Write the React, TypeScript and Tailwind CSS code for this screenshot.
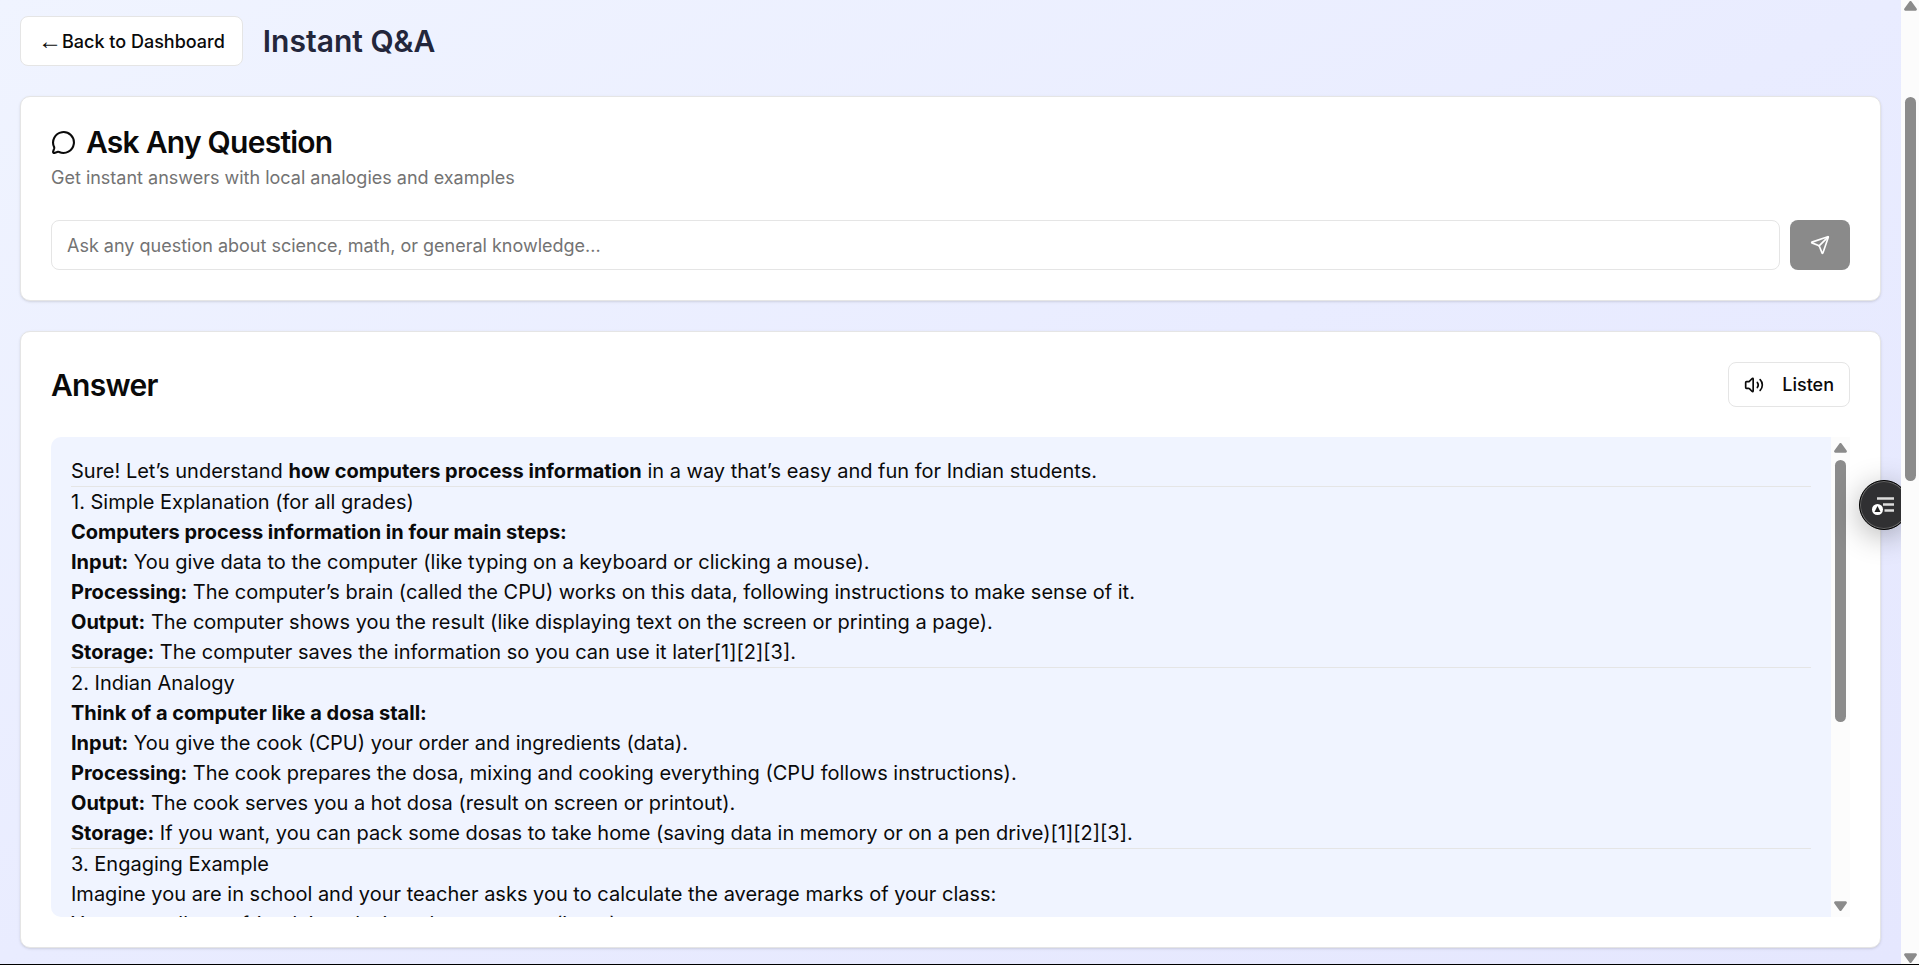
import { ReactNode, useState } from "react";
import { MessageCircle, Send, Volume2 } from "lucide-react";

type Line = { lead?: string; text?: string; tail?: string };

const sections: Line[][] = [
  [
    {
      text: "Sure! Let’s understand ",
      lead: "how computers process information",
      tail: " in a way that’s easy and fun for Indian students.",
    },
  ],
  [
    { text: "1. Simple Explanation (for all grades)" },
    { lead: "Computers process information in four main steps:" },
    { lead: "Input:", tail: " You give data to the computer (like typing on a keyboard or clicking a mouse)." },
    {
      lead: "Processing:",
      tail: " The computer’s brain (called the CPU) works on this data, following instructions to make sense of it.",
    },
    {
      lead: "Output:",
      tail: " The computer shows you the result (like displaying text on the screen or printing a page).",
    },
    { lead: "Storage:", tail: " The computer saves the information so you can use it later[1][2][3]." },
  ],
  [
    { text: "2. Indian Analogy" },
    { lead: "Think of a computer like a dosa stall:" },
    { lead: "Input:", tail: " You give the cook (CPU) your order and ingredients (data)." },
    {
      lead: "Processing:",
      tail: " The cook prepares the dosa, mixing and cooking everything (CPU follows instructions).",
    },
    { lead: "Output:", tail: " The cook serves you a hot dosa (result on screen or printout)." },
    {
      lead: "Storage:",
      tail: " If you want, you can pack some dosas to take home (saving data in memory or on a pen drive)[1][2][3].",
    },
  ],
  [
    { text: "3. Engaging Example" },
    { text: "Imagine you are in school and your teacher asks you to calculate the average marks of your class:" },
    { text: "You enter all your friends’ marks into the computer (input)." },
  ],
];

function Card({ children }: { children: ReactNode }) {
  return (
    <section className="rounded-[10px] border border-[#e5e5e5] bg-white p-[30px] shadow-sm">
      {children}
    </section>
  );
}

function Arrow({ down = false }: { down?: boolean }) {
  return (
    <svg
      width="13"
      height="10"
      viewBox="0 0 13 10"
      fill="#8b8b8b"
      aria-hidden
      className={down ? "shrink-0 rotate-180" : "shrink-0"}
    >
      <path d="M5.3 0.7a1.5 1.5 0 0 1 2.4 0l4.9 6.9a1.3 1.3 0 0 1-1.1 2.1H1.5A1.3 1.3 0 0 1 .4 7.6z" />
    </svg>
  );
}

function ScrollTrack({ className, before, thumb, after }: {
  className: string;
  before: number;
  thumb: number;
  after: number;
}) {
  return (
    <div aria-hidden className={["flex shrink-0 flex-col items-center bg-[#fcfcfc]", className].join(" ")}>
      <Arrow />
      <div className="flex w-[11px] flex-1 flex-col py-[7px]">
        <div style={{ flexGrow: before }} />
        <div className="rounded-full bg-[#8b8b8b]" style={{ flexGrow: thumb }} />
        <div style={{ flexGrow: after }} />
      </div>
      <Arrow down />
    </div>
  );
}

export default function App() {
  const [question, setQuestion] = useState("");

  return (
    <div className="flex h-screen overflow-hidden border-b border-black font-['Inter',sans-serif] text-[#0a0a0a]">
      <div className="relative min-w-0 flex-1 overflow-hidden bg-linear-to-br from-[#f0f4ff] via-[#e9ecff] to-[#e5e7fe]">
        <main className="flex flex-col gap-[30px] px-5 pt-4">
          <header className="flex items-center gap-5">
            <button
              type="button"
              className="flex h-[50px] items-center rounded-lg border border-[#e5e5e5] bg-white px-[17px] text-[18px] font-medium"
            >
              <span className="font-['Liberation_Sans',sans-serif] text-[24px] leading-6 font-normal">←</span>
              Back to Dashboard
            </button>
            <h1 className="text-[30px] leading-9 font-semibold text-[#23263b]">Instant Q&amp;A</h1>
          </header>

          <Card>
            <h2 className="flex items-center gap-[10px] text-[30px] leading-[30px] font-semibold tracking-tight">
              <MessageCircle size={25} />
              Ask Any Question
            </h2>
            <p className="mt-2 text-[18px] leading-[25px] text-[#737373]">
              Get instant answers with local analogies and examples
            </p>
            <form className="mt-[30px] flex gap-[10px]" onSubmit={(e) => e.preventDefault()}>
              <input
                type="text"
                aria-label="Your question"
                value={question}
                onChange={(e) => setQuestion(e.target.value)}
                placeholder="Ask any question about science, math, or general knowledge..."
                className="h-[50px] min-w-0 flex-1 rounded-lg border border-[#e5e5e5] bg-white px-[15px] text-[18px] placeholder:text-[#737373]"
              />
              <button
                type="submit"
                aria-label="Send"
                disabled={!question}
                className="flex h-[50px] w-[60px] items-center justify-center rounded-lg bg-[#171717] text-white disabled:opacity-50"
              >
                <Send size={20} />
              </button>
            </form>
          </Card>

          <Card>
            <div className="flex items-center justify-between">
              <h2 className="text-[30px] leading-[30px] font-semibold tracking-tight">Answer</h2>
              <button
                type="button"
                className="flex h-[45px] items-center gap-[18px] rounded-lg border border-[#e5e5e5] bg-white px-[15px] text-[18px] font-medium"
              >
                <Volume2 size={20} />
                Listen
              </button>
            </div>
            <div className="mt-[30px] flex h-[480px] overflow-hidden rounded-l-[10px] bg-[#f0f4ff]">
              <div className="min-w-0 flex-1 px-5 pt-[19px] text-[20px] leading-[30px]">
                {sections.map((lines, i) => (
                  <div key={i} className={i > 0 ? "border-t border-[#e5e5e5]" : ""}>
                    {lines.map((line, j) => (
                      <p key={j}>
                        {line.text}
                        {line.lead && <strong className="font-bold">{line.lead}</strong>}
                        {line.tail}
                      </p>
                    ))}
                  </div>
                ))}
              </div>
              <ScrollTrack className="w-[19px] py-[6px]" before={0} thumb={262} after={172} />
            </div>
          </Card>
        </main>

        <button
          type="button"
          aria-label="Open reading panel"
          className="absolute top-[480px] -right-[8px] flex size-[50px] items-center justify-center rounded-full border border-black bg-[#303032] shadow-[0_6px_30px_rgba(0,0,0,0.3)] ring-1 ring-[#666] ring-inset"
        >
          <svg width="24" height="20" viewBox="0 0 24 20" fill="none" aria-hidden>
            <path d="M5 3.500H22M11 9.500H22M12.500 15.500H22" stroke="#dcdcdc" strokeWidth="2.500" />
            <circle cx="5.500" cy="14.500" r="5.500" fill="#fff" />
            <path d="M5.500 11l3 6h-6z" fill="#222" />
          </svg>
        </button>
      </div>

      <ScrollTrack className="w-[18px] py-[1px]" before={79} thumb={384} after={466} />
    </div>
  );
}
